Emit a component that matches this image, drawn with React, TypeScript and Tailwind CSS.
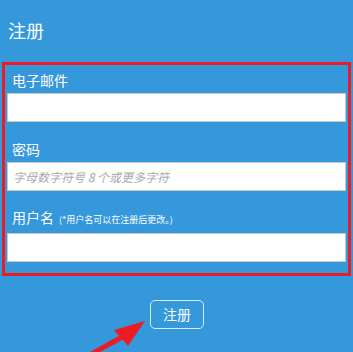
import React from "react";

function Field({ label, note, placeholder }: { label: string; note?: string; placeholder?: string }) {
  return (
    <div>
      <div className="pl-[5px] text-[14px] leading-[20px] text-white">
        {label}
        {note && <span className="ml-[5px] text-[9px]">{note}</span>}
      </div>
      <div className="mt-[3px] h-[29px] border border-[#c8c8c8] bg-white pl-[5px] flex items-center">
        {placeholder && <span className="text-[12px] italic text-[#a8a8a8]">{placeholder}</span>}
      </div>
    </div>
  );
}

export default function App() {
  return (
    <div
      className="relative h-[352px] w-[353px] overflow-hidden bg-[#3498db]"
      style={{ fontFamily: '"Noto Sans CJK SC", "Noto Sans", sans-serif' }}
    >
      <div className="pl-[8px] pt-[18px] text-[18px] leading-[24px] text-white">注册</div>
      <div className="ml-[2px] mt-[20px] w-[349px] border-[3px] border-[#ec1c24] px-[2px] pt-[5px] pb-[11px]">
        <Field label="电子邮件" />
        <div className="mt-[17px]">
          <Field label="密码" placeholder="字母数字符号 8 个或更多字符" />
        </div>
        <div className="mt-[16px]">
          <Field label="用户名" note="(*用户名可以在注册后更改。)" />
        </div>
      </div>
      <div className="mt-[24px] flex justify-center pl-[1px]">
        <div className="flex h-[29px] w-[54px] items-center justify-center rounded-[5px] border-[1.5px] border-white/80 text-[14px] text-white">
          注册
        </div>
      </div>
      <svg className="absolute left-0 top-0" width="353" height="352" viewBox="0 0 353 352">
        <line x1="88" y1="356" x2="124" y2="336" stroke="#ec1c24" strokeWidth="5" />
        <polygon points="145,321 114,330 128,346" fill="#ec1c24" />
      </svg>
    </div>
  );
}
